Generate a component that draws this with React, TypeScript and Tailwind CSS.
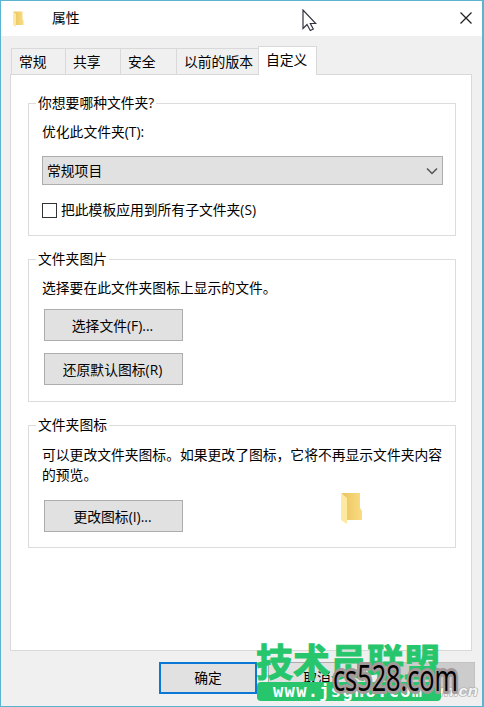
import React, { useState } from "react";

const tabs = [
    { id: "general", title: "常规", style: "w-[54px]" },
    { id: "sharing", title: "共享", style: "w-[55px]" },
    { id: "security", title: "安全", style: "w-[56px]" },
    { id: "versions", title: "以前的版本", style: "w-[82px]" },
];

const FolderIcon = ({ className }) => (
    <svg viewBox="0 0 22 32" preserveAspectRatio="none" className={className}>
        <defs>
            <linearGradient id="folderBack" x1="0" x2="1">
                <stop offset="0" stopColor="#e9c55f" />
                <stop offset="1" stopColor="#fbdc82" />
            </linearGradient>
        </defs>
        <path d="M1 1h18v15l2 3v9H6z" fill="url(#folderBack)" />
        <path d="M0 1l6 5v26l-6-4z" fill="#ffe8a0" />
    </svg>
);

const Group = ({ title, className, children }) => (
    <fieldset className={`min-w-0 border border-[#dcdcdc] pl-[13px] ${className}`}>
        <legend className="-ml-[6px] h-4 px-[2px] leading-4">{title}</legend>
        {children}
    </fieldset>
);

const Button = ({ children, className = "" }) => (
    <button className={`block h-[32px] w-[139px] border border-[#adadad] bg-[#e1e1e1] pr-[2px] text-center leading-[29px] ${className}`}>
        {children}
    </button>
);

const Watermark = () => (
    <svg viewBox="0 0 234 70" className="absolute top-[636px] left-[249px] h-[70px] w-[234px]">
        <text x="179" y="59" textLength="49" lengthAdjust="spacingAndGlyphs" fontSize="15" fontStyle="italic" fontWeight="bold" fill="#f4f4f4" stroke="#a8a8a8" strokeWidth="1.2" paintOrder="stroke" className="font-['Liberation_Sans',sans-serif]">om.cn</text>
        <text x="6" y="39" textLength="185" lengthAdjust="spacingAndGlyphs" fontSize="38" fontWeight="700" fill="#27c66c" stroke="#27c66c" strokeWidth="1" className="font-['Noto_Sans_CJK_SC',sans-serif]">技术员联盟</text>
        <rect x="7" y="45" width="184" height="19" rx="4" fill="#27c66c" />
        <text x="23" y="60" textLength="149" lengthAdjust="spacing" fontSize="17" fontWeight="bold" fill="#fff" className="font-['DejaVu_Sans_Mono',monospace]">www.jsgho.com</text>
        <text x="83" y="54" textLength="125" lengthAdjust="spacingAndGlyphs" fontSize="36" fill="#000" stroke="#a59a9a" strokeWidth="6" strokeLinejoin="round" paintOrder="stroke" className="font-['Open_Sans',sans-serif]">cs528.com</text>
    </svg>
);

const App = () => {
    const [checked, setChecked] = useState(false);

    return (
        <div className="relative flex h-[707px] w-[484px] flex-col overflow-hidden border border-r-2 border-[#5bb3cf] bg-[#f0f0f0] font-['Open_Sans','Noto_Sans_CJK_SC',sans-serif] text-[13.8px] leading-[20px] text-black">
            {/* Заголовок окна */}
            <div className="flex h-[35px] shrink-0 items-center bg-white">
                <FolderIcon className="ml-[12px] h-[16px] w-[11px]" />
                <span className="-mt-[2px] ml-[28px]">属性</span>
                <svg viewBox="0 0 12 12" className="-mt-[2px] mr-[10px] ml-auto h-3 w-3">
                    <path d="M.5.5l11 11M11.5.5l-11 11" stroke="#222" strokeWidth="1.3" />
                </svg>
            </div>

            {/* Вкладки */}
            <div className="relative z-10 mt-[10px] -mb-[1px] ml-[10px] flex h-[29px] shrink-0 items-end">
                {tabs.map((tab) => (
                    <div key={tab.id} className={`h-[27px] border-t border-b border-l border-[#d9d9d9] pl-[7px] leading-[25px] whitespace-nowrap ${tab.style}`}>
                        {tab.title}
                    </div>
                ))}
                <div className="h-[29px] w-[59px] border border-b-0 border-[#d9d9d9] bg-white pl-[7px] leading-[25px]">自定义</div>
            </div>

            <div className="ml-[9px] h-[577px] w-[462px] shrink-0 border border-[#d9d9d9] bg-white pt-[20px] pr-[15px] pl-[17px]">
                <Group title="你想要哪种文件夹?" className="h-[141px]">
                    <div className="mt-[11px]">优化此文件夹(T):</div>
                    <div className="mt-[14px] flex h-[29px] w-[401px] items-center border border-[#adadad] bg-[#e1e1e1] pl-[4px]">
                        常规项目
                        <svg viewBox="0 0 12 8" className="mr-[4px] ml-auto h-2 w-3">
                            <path d="M1 1.5l5 5 5-5" fill="none" stroke="#555" strokeWidth="1.5" />
                        </svg>
                    </div>
                    <div className="mt-[15px] flex items-center" onClick={() => setChecked(!checked)}>
                        <div className="mr-[4px] h-[15px] w-[15px] border border-[#333] bg-white text-center text-xs leading-3">{checked && "✓"}</div>
                        把此模板应用到所有子文件夹(S)
                    </div>
                </Group>

                <Group title="文件夹图片" className="mt-[15px] h-[151px]">
                    <div className="mt-[11px]">选择要在此文件夹图标上显示的文件。</div>
                    <Button className="mt-[11px] ml-[2px]">选择文件(F)...</Button>
                    <Button className="mt-[12px] ml-[2px]">还原默认图标(R)</Button>
                </Group>

                <Group title="文件夹图标" className="mt-[15px] h-[131px]">
                    <div className="mt-[12px] w-[404px] whitespace-nowrap">
                        可以更改文件夹图标。如果更改了图标，它将不再显示文件夹内容
                        <br />
                        的预览。
                    </div>
                    <div className="flex items-start">
                        <Button className="mt-[15px] ml-[2px]">更改图标(I)...</Button>
                        <FolderIcon className="mt-[7px] ml-[158px] h-[32px] w-[22px]" />
                    </div>
                </Group>
            </div>

            {/* Кнопки внизу окна */}
            <div className="mt-[11px] ml-[158px] flex">
                <button className="h-[32px] w-[98px] border-2 border-[#0b78d7] bg-[#e1e1e1] leading-[28px]">确定</button>
                <button className="ml-[11px] h-[32px] w-[98px] border border-[#adadad] bg-[#e1e1e1] leading-[30px]">取消</button>
                <div className="ml-[11px] h-[32px] w-[98px] border border-[#c2c2c2] bg-[#cccccc]" />
            </div>

            <Watermark />

            {/* Курсор */}
            <svg viewBox="0 0 15 23" className="absolute top-[8px] left-[301px] h-[23px] w-[15px]">
                <path d="M1 1v18.5l4-4 3.3 6 3-1.5-3-5.5h5.5z" fill="#fff" stroke="#333340" strokeWidth="1.2" />
            </svg>
        </div>
    );
};

export default App;
